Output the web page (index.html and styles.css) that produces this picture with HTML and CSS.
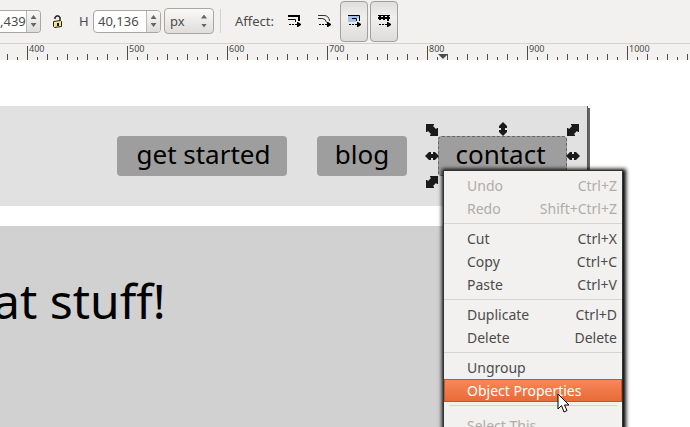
FILE: index.html
```html
<!DOCTYPE html>
<html lang="en">
<head>
<meta charset="utf-8">
<title>Drawing editor</title>
<link rel="stylesheet" href="styles.css">
</head>
<body>
<svg class="defs" aria-hidden="true">
  <symbol id="diag" viewBox="0 0 12 12"><path d="M0 0h8v1L7 2l3 3 1-1h1v8H4v-1l1-1-3-3-1 1H0z"/></symbol>
  <symbol id="vert" viewBox="0 0 10 14"><path d="M5 0 9 4v2H7v2h2v2l-4 4-4-4V8h2V6H1V4z"/></symbol>
  <symbol id="arrow" viewBox="0 0 12 5"><path d="M0 2h2v1H0zM3 2h2v1H3zM6 2h2V0h1l3 2v1L9 5H8V3H6z"/></symbol>
</svg>
<header class="toolbar">
  <div class="spin width-spin">
    <input class="spin-value" type="text" value=",439" aria-label="Width">
    <div class="steps"><button aria-label="Increase width"></button><button class="down" aria-label="Decrease width"></button></div>
  </div>
  <button class="lock" aria-label="Lock ratio">
    <svg width="11" height="13" viewBox="0 0 11 13"><path d="M3 4V2.500L4.500 1h2L8 2.500V6" fill="none" stroke="#222" stroke-width="1.500"/><path d="M1.500 6.500 8.500 5.500l1 1v5l-7 1-1-1z" fill="#f5e48b" stroke="#222"/><path d="M5 8h2v3H5z" fill="#111"/></svg>
  </button>
  <label class="height-label" for="h">H</label>
  <div class="spin">
    <input class="spin-value" id="h" type="text" value="40,136">
    <div class="steps"><button aria-label="Increase height"></button><button class="down" aria-label="Decrease height"></button></div>
  </div>
  <div class="unit steps">
    <select aria-label="Unit"><option>px</option></select>
    <i></i><i class="down"></i>
  </div>
  <div class="rule"></div>
  <span class="affect">Affect:</span>
  <div class="toggles">
    <button class="toggle" aria-label="Scale stroke width">
      <svg width="14" height="14" viewBox="0 0 14 14"><path d="M1 2h11v5" fill="none" stroke="#000" stroke-width="2"/><path d="M1 5.500h7.500V8" fill="none" stroke="#000"/><use href="#arrow" x="2" y="8" width="12" height="5"/></svg>
    </button>
    <button class="toggle" aria-label="Scale rounded corners">
      <svg width="14" height="14" viewBox="0 0 14 14"><path d="M1 1.500h6q5 0 5.500 5.500M1 4.500h4q4 0 4.500 4" fill="none" stroke="#333"/><use href="#arrow" x="2" y="8" width="12" height="5"/></svg>
    </button>
    <button class="toggle on" aria-label="Move gradients" aria-pressed="true">
      <svg width="14" height="14" viewBox="0 0 14 14"><path d="M1 2h11v2H9v4H1z" fill="#a4c2e8"/><path d="M1 1.500h11.500V7" fill="none" stroke="#000"/><path d="M5 4.500h4.500V7" fill="none" stroke="#000"/><use href="#arrow" x="2" y="8" width="12" height="5"/></svg>
    </button>
    <button class="toggle on" aria-label="Move patterns" aria-pressed="true">
      <svg width="14" height="14" viewBox="0 0 14 14"><path d="M1 1h12v1H1zM2 2h2v1h1v2H4v1H2V5H1V3h1zM6 2h2v1h1v2H8v1H6V5H5V3h1zM10 2h2v1h1v2h-1v2h-2V5H9V3h1z"/><use href="#arrow" x="2" y="8" width="12" height="5"/></svg>
    </button>
  </div>
</header>
<div class="ruler">
  <span class="cell first"></span><span class="cell">400</span><span class="cell">500</span><span class="cell">600</span><span class="cell">700</span><span class="cell">800</span><span class="cell">900</span><span class="cell last">1000</span>
  <i class="marker"></i>
</div>
<main class="canvas">
  <div class="sheet">
    <nav class="site-nav">
      <a class="pill wide" href="#">get started</a>
      <a class="pill small" href="#">blog</a>
      <a class="pill medium selected" href="#">contact
        <svg class="handle nw"><use href="#diag"/></svg>
        <svg class="handle n"><use href="#vert"/></svg>
        <svg class="handle ne"><use href="#diag"/></svg>
        <svg class="handle w"><use href="#vert"/></svg>
        <svg class="handle e"><use href="#vert"/></svg>
        <svg class="handle sw"><use href="#diag"/></svg>
      </a>
    </nav>
    <section class="hero"><h1>at stuff!</h1></section>
  </div>
</main>
<div class="menu" role="menu">
  <button class="item" role="menuitem" disabled><span>Undo</span><span>Ctrl+Z</span></button>
  <button class="item" role="menuitem" disabled><span>Redo</span><span>Shift+Ctrl+Z</span></button>
  <hr>
  <button class="item" role="menuitem"><span>Cut</span><span>Ctrl+X</span></button>
  <button class="item" role="menuitem"><span>Copy</span><span>Ctrl+C</span></button>
  <button class="item" role="menuitem"><span>Paste</span><span>Ctrl+V</span></button>
  <hr>
  <button class="item" role="menuitem"><span>Duplicate</span><span>Ctrl+D</span></button>
  <button class="item" role="menuitem"><span>Delete</span><span>Delete</span></button>
  <hr>
  <button class="item" role="menuitem"><span>Ungroup</span></button>
  <button class="item active" role="menuitem"><span>Object Properties</span></button>
  <hr class="inset">
  <button class="item" role="menuitem" disabled><span>Select This</span></button>
</div>
<svg class="cursor" viewBox="0 0 13 20"><path d="M1 1v15l3.500-3.500L7 19l3-1.500L7.500 12H12z" fill="#fff" stroke="#000"/></svg>
</body>
</html>
```
FILE: styles.css
```css
* { box-sizing: border-box; }
body {
  margin: 0;
  height: 100vh;
  display: flex;
  flex-direction: column;
  overflow: hidden;
  position: relative;
  background: #fff;
  color: #4c4c4c;
  font: 13px/20px "Noto Sans", sans-serif;
}
button, input, select { font: inherit; color: inherit; }
button { border: 0; padding: 0; background: none; }
.defs { position: absolute; width: 0; height: 0; }

.toolbar {
  flex: none;
  display: flex;
  align-items: center;
  height: 44px;
  padding-bottom: 1px;
  background: #f2f1ef;
  border-bottom: 1px solid #d6d2cf;
}
.spin {
  display: flex;
  width: 68px;
  height: 23px;
  border: 1px solid #aaa6a2;
  border-radius: 4px;
  background: #fff;
  overflow: hidden;
}
.spin-value {
  flex: 1;
  min-width: 0;
  border: 0;
  padding: 0 0 0 4px;
  background: none;
  outline: 0;
}
.width-spin { width: 41px; border-left: 0; border-radius: 0 4px 4px 0; }
.width-spin .spin-value { padding: 0; }
.steps { display: flex; flex-direction: column; justify-content: center; }
.spin .steps {
  width: 14px;
  gap: 4px;
  align-items: center;
  border-left: 1px solid #bcb8b4;
  background: linear-gradient(#f8f8f7, #dedcda);
}
.steps button, .steps i {
  width: 6px;
  height: 4px;
  background: #666;
  clip-path: polygon(50% 0, 100% 100%, 0 100%);
}
.steps .down { clip-path: polygon(0 0, 100% 0, 50% 100%); }
.lock { display: flex; width: 11px; margin-left: 11px; }
.height-label { margin: 0 5px 0 16px; width: 9px; }
.unit {
  position: relative;
  width: 50px;
  height: 26px;
  margin-left: 3px;
  padding-left: 36px;
  gap: 5px;
  border: 1px solid #aaa6a2;
  border-radius: 4px;
  background: linear-gradient(#fafaf9, #dfdddb);
}
.unit select {
  position: absolute;
  inset: 0;
  padding: 0 0 0 5px;
  border: 0;
  background: none;
  appearance: none;
}
.rule { width: 1px; height: 24px; margin-left: 6px; background: #d6d2cf; }
.affect { width: 45px; margin-left: 14px; }
.toggles { display: flex; gap: 2px; }
.toggle {
  display: grid;
  place-items: center;
  width: 28px;
  height: 41px;
  border: 1px solid transparent;
  border-radius: 4px;
}
.toggle.on {
  border-color: #a29f9c;
  background: linear-gradient(#e0dfdd, #f0efed 40%, #dedcda);
}

.ruler {
  position: relative;
  flex: none;
  display: flex;
  height: 16px;
  background: #f2f1ef;
  font-size: 9px;
  line-height: 10px;
}
.cell {
  flex: none;
  width: 100px;
  padding-left: 2px;
  background:
    linear-gradient(#4c4c4c, #4c4c4c) 0 2px / 1px 14px no-repeat,
    repeating-linear-gradient(90deg, #4c4c4c 0 1px, transparent 1px 20px) 0 10px / 100px 6px no-repeat,
    repeating-linear-gradient(90deg, #4c4c4c 0 1px, transparent 1px 10px) 0 13px / 100px 3px no-repeat;
}
.first { width: 27px; background-position: -73px 2px, -73px 10px, -73px 13px; }
.last { flex: 1; min-width: 0; }
.marker {
  position: absolute;
  left: 438px;
  top: 10px;
  width: 10px;
  height: 5px;
  background: #4c4c4c;
  clip-path: polygon(0 0, 100% 0, 50% 100%);
}

.canvas { flex: 1; min-height: 0; padding-top: 46px; }
.sheet {
  width: 588px;
  height: 100%;
  border-right: 1px solid #555;
  box-shadow: 2px 2px 0 #666;
  background: #fff;
}
.site-nav {
  display: flex;
  justify-content: flex-end;
  align-items: center;
  gap: 30px;
  height: 100px;
  padding-right: 20px;
  background: #e1e1e1;
}
.pill {
  height: 40px;
  border-radius: 4px;
  background: #9e9e9e;
  color: #000;
  font: 26px/36px "Noto Sans", sans-serif;
  text-align: center;
  text-decoration: none;
}
.wide { width: 170px; padding-left: 3px; }
.small { width: 90px; }
.medium { width: 129px; margin-left: 1px; padding-right: 4px; }
.selected { position: relative; outline: 1px dashed #666; outline-offset: -1px; }
.handle { position: absolute; width: 12px; height: 12px; fill: #1a1a1a; }
.nw { left: -12px; top: -12px; }
.ne { right: -12px; top: -12px; transform: scaleX(-1); }
.sw { left: -12px; bottom: -12px; transform: scaleX(-1); }
.n, .w, .e { width: 10px; height: 14px; }
.n { left: 60px; top: -14px; }
.w { left: -11px; top: 13px; transform: rotate(90deg); }
.e { right: -11px; top: 13px; transform: rotate(90deg); }
.hero {
  margin-top: 20px;
  height: calc(100% - 120px);
  padding-top: 42px;
  background: #d1d1d1;
}
.hero h1 {
  margin: 0 0 0 -7px;
  color: #000;
  font: 48px/66px "Noto Sans", sans-serif;
}

.menu {
  position: absolute;
  left: 444px;
  top: 171px;
  width: 178px;
  padding: 3px 0;
  background: #f2f1f0;
  box-shadow: 0 0 0 1px #333, 1px 1px 4px 3px #000;
  font-size: 14px;
}
.item {
  display: flex;
  justify-content: space-between;
  align-items: center;
  width: 100%;
  height: 23px;
  padding: 0 5px 0 23px;
}
.item:disabled { color: #b0aca8; }
.menu hr {
  height: 1px;
  margin: 3px 0;
  border: 0;
  background: #d6d3d0;
}
.menu .inset { margin: 3px 5px 8px; }
.active {
  border: 1px solid #c6562b;
  padding: 0 4px 0 22px;
  background: linear-gradient(#fa8658, #e76b37);
  color: #fff;
}
.cursor { position: absolute; left: 557px; top: 393px; width: 13px; height: 20px; }
```
